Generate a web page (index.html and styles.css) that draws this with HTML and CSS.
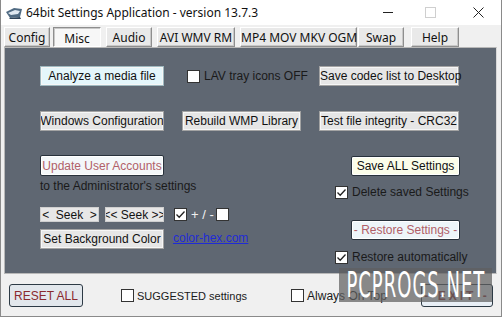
FILE: index.html
```html
<!DOCTYPE html>
<html lang="en">
<head>
  <meta charset="UTF-8">
  <title>64bit Settings Application</title>
  <link rel="stylesheet" href="styles.css">
</head>
<body>
  <div class="window">
    <div class="titlebar">
      <svg class="app-icon" width="18" height="14" viewBox="0 0 18 14">
        <path d="M1 6 L9 2 L17 3 L15 11 L5 12 Z" fill="#4f6a82"/>
        <path d="M3 7 L10 4 L15 5 L13 8 L6 9 Z" fill="#dfe8f0"/>
        <path d="M5 12 L15 11 L16 13 L4 13 Z" fill="#2e4358"/>
      </svg>
      <span class="title">64bit Settings Application - version 13.7.3</span>
      <div class="controls">
        <span class="ctl ctl-min"></span>
        <span class="ctl ctl-max"></span>
        <svg class="ctl ctl-close" width="11" height="11" viewBox="0 0 11 11">
          <path d="M0.5 0.5 L10.5 10.5 M10.5 0.5 L0.5 10.5" stroke="#222" stroke-width="1"/>
        </svg>
      </div>
    </div>

    <div class="tabs">
      <button class="tab tab-config">Config</button>
      <button class="tab tab-active">Misc</button>
      <button class="tab">Audio</button>
      <button class="tab tab-wide">AVI WMV RM</button>
      <button class="tab tab-wider">MP4 MOV MKV OGM</button>
      <button class="tab tab-swap">Swap</button>
      <button class="tab tab-help">Help</button>
    </div>

    <div class="panel">
      <div class="grid-top">
        <button class="btn btn-cyan">Analyze a media file</button>
        <label class="check check-lav"><span class="box"></span>LAV tray icons OFF</label>
        <button class="btn">Save codec list to Desktop</button>

        <button class="btn btn-clip"><span>Windows Configuration</span></button>
        <button class="btn">Rebuild WMP Library</button>
        <button class="btn">Test file integrity - CRC32</button>
      </div>

      <div class="lower">
        <div class="left">
          <button class="btn btn-red btn-tall">Update User Accounts</button>
          <div class="note">to the Administrator's settings</div>
          <div class="seek-row">
            <button class="btn-seek">&lt;&nbsp; Seek &nbsp;&gt;</button>
            <button class="btn-seek btn-clip"><span>&lt;&lt; Seek &gt;&gt;</span></button>
            <span class="box box-checked"><svg width="11" height="11" viewBox="0 0 11 11"><path d="M1.5 5.5 L4.2 8.3 L9.5 2.5" fill="none" stroke="#222" stroke-width="1.3"/></svg></span>
            <span class="plusminus">+ / -</span>
            <span class="box"></span>
          </div>
          <div class="bg-row">
            <button class="btn">Set Background Color</button>
            <a class="link" href="#">color-hex.com</a>
          </div>
        </div>

        <div class="right">
          <button class="btn btn-yellow">Save ALL Settings</button>
          <label class="check check-del"><span class="box box-checked"><svg width="11" height="11" viewBox="0 0 11 11"><path d="M1.5 5.5 L4.2 8.3 L9.5 2.5" fill="none" stroke="#222" stroke-width="1.3"/></svg></span>Delete saved Settings</label>
          <button class="btn btn-red btn-restore">- Restore Settings -</button>
          <label class="check check-auto"><span class="box box-checked"><svg width="11" height="11" viewBox="0 0 11 11"><path d="M1.5 5.5 L4.2 8.3 L9.5 2.5" fill="none" stroke="#222" stroke-width="1.3"/></svg></span>Restore automatically</label>
        </div>
      </div>
    </div>

    <div class="footer">
      <button class="btn-round btn-reset">RESET ALL</button>
      <label class="check check-suggest"><span class="box"></span>SUGGESTED settings</label>
      <label class="check check-top"><span class="box"></span>Always On Top</label>
      <button class="btn-round btn-exit">- EXIT -</button>
    </div>

    <div class="watermark"><span>PCPROGS.NET</span></div>
  </div>
</body>
</html>
```

FILE: styles.css
```css
:root {
  --panel: #5f6772;
  --face: #f0f0f0;
  --red-text: #b15f68;
}

body {
  margin: 0;
  padding: 0;
  background: var(--face);
  font-family: 'Liberation Sans', Arial, sans-serif;
  font-size: 12px;
  color: #1a1a1a;
}

.window {
  position: relative;
  width: 502px;
  height: 317px;
  box-sizing: border-box;
  border: 1px solid #8a8a8a;
  border-top: none;
  background: var(--face);
  overflow: hidden;
}

/* title bar */
.titlebar {
  height: 25px;
  background: #fff;
  display: flex;
  align-items: center;
  font-family: 'Noto Sans', sans-serif;
}

.app-icon {
  margin-left: 4px;
  margin-right: 3px;
}

.title {
  font-size: 12px;
  color: #111;
}

.controls {
  margin-left: auto;
  display: flex;
  align-items: center;
}

.ctl-min {
  width: 10px;
  height: 1px;
  background: #222;
  margin-right: 32px;
}

.ctl-max {
  width: 9px;
  height: 9px;
  border: 1px solid #cfcfcf;
  margin-right: 37px;
}

.ctl-close {
  margin-right: 17px;
}

/* tabs */
.tabs {
  display: flex;
  padding: 2px 0 0 3px;
  height: 22px;
  box-sizing: border-box;
}

.tab {
  font-family: 'Noto Sans', sans-serif;
  font-size: 12px;
  height: 20px;
  padding: 0;
  width: 46px;
  margin-right: 5px;
  background: #e9e9e9;
  color: #111;
  border: 1px solid;
  border-color: #fff #8e8e8e #8e8e8e #fff;
  box-shadow: inset -1px -1px 0 #c8c8c8;
  white-space: nowrap;
}

.tab-config {
  margin-right: 3px;
}

.tab-active {
  width: 48px;
  background: #f7f7f7;
  border-color: #8e8e8e #fff #fff #8e8e8e;
  box-shadow: inset 1px 1px 0 #c8c8c8;
  padding-top: 2px;
}

.tab-wide {
  width: 78px;
}

.tab-wider {
  width: 117px;
  margin-right: 1px;
}

.tab-swap {
  margin-right: 7px;
}

.tab-help {
  width: 48px;
}

/* main panel */
.panel {
  margin: 0 4px 0 3px;
  height: 227px;
  box-sizing: border-box;
  background: var(--panel);
  border: 1px solid #b8b8b8;
  border-right-color: #d8d8d8;
  padding: 18px 0 0 35px;
}

.grid-top {
  display: grid;
  grid-template-columns: 124px 119px 140px;
  grid-auto-rows: 20px;
  column-gap: 18px;
  row-gap: 25px;
}

.btn {
  font: inherit;
  font-size: 12px;
  height: 20px;
  padding: 0;
  background: #e6e6e6;
  color: #111;
  border: 1px solid #a3a3a3;
  box-shadow: inset 0 0 0 1px #f6f6f6;
  white-space: nowrap;
}

.btn-clip {
  overflow: hidden;
  display: flex;
  align-items: center;
  justify-content: center;
}

.btn-clip span {
  flex-shrink: 0;
}

.btn-cyan {
  background: #e4f6fb;
  border-color: #9fb9c0;
}

.btn-red {
  color: var(--red-text);
  background: #f3f7f9;
  border-color: #27313b;
  border-radius: 2px;
  box-shadow: inset 0 0 0 1px #fff;
}

.btn-tall {
  width: 124px;
  height: 21px;
}

.btn-yellow {
  width: 109px;
  background: #fbfdea;
  border-color: #27313b;
  border-radius: 2px;
  box-shadow: inset 0 0 0 1px #fff;
}

.btn-restore {
  width: 109px;
  background: #edf5f9;
  margin-top: 21px;
}

/* checkboxes */
.check {
  display: flex;
  align-items: center;
  gap: 4px;
  white-space: nowrap;
}

.box {
  width: 11px;
  height: 11px;
  flex-shrink: 0;
  border: 1px solid #333;
  background: #fff;
  display: inline-flex;
  align-items: center;
  justify-content: center;
}

.check-lav {
  padding-left: 5px;
}

/* lower half */
.lower {
  display: flex;
  margin-top: 24px;
}

.left {
  width: 295px;
}

.note {
  margin-top: 2px;
  line-height: 16px;
}

.seek-row {
  display: flex;
  align-items: center;
  margin-top: 13px;
  height: 15px;
}

.btn-seek {
  font: inherit;
  font-size: 12px;
  width: 59px;
  height: 15px;
  padding: 0;
  margin-right: 6px;
  background: #e7e7e7;
  color: #111;
  border: 1px solid #cfcfcf;
  line-height: 12px;
  white-space: nowrap;
}

.seek-row .box-checked {
  margin-left: 4px;
}

.plusminus {
  font-size: 13px;
  margin: 0 2px 0 4px;
  color: #f0f0f0;
}

.bg-row {
  display: flex;
  align-items: center;
  margin-top: 7px;
  gap: 9px;
}

.bg-row .btn {
  width: 124px;
}

.link {
  color: #1f2bd6;
  text-decoration: underline;
  margin-top: -2px;
}

.right {
  width: 125px;
  display: flex;
  flex-direction: column;
  align-items: flex-end;
  padding-top: 1px;
}

.right .check {
  align-self: stretch;
}

.check-del {
  margin-top: 9px;
}

.check-auto {
  margin-top: 10px;
}

/* footer */
.footer {
  display: flex;
  align-items: center;
  padding: 10px 0 0 8px;
}

.footer .check {
  font-size: 11px;
  gap: 3px;
}

.btn-round {
  font: inherit;
  font-size: 12px;
  height: 23px;
  padding: 0;
  border: 1px solid #2d3a45;
  border-radius: 3px;
  color: #8a2a2e;
}

.btn-reset {
  width: 74px;
  background: #e2e7ec;
}

.check-suggest {
  margin-left: 38px;
}

.footer .check-top {
  margin-left: 44px;
  font-size: 12px;
}

.btn-exit {
  width: 72px;
  margin-left: auto;
  margin-right: 8px;
  background: #e8eff6;
  font-weight: bold;
  letter-spacing: 3px;
}

/* overlay */
.watermark {
  position: absolute;
  left: 338px;
  top: 268px;
  width: 153px;
  height: 34px;
  background: rgba(96, 96, 96, 0.72);
  color: #fff;
  font-family: 'DejaVu Sans', sans-serif;
  font-size: 36px;
  line-height: 36px;
  display: flex;
  justify-content: center;
  overflow: hidden;
}

.watermark span {
  flex-shrink: 0;
  transform: scaleX(0.5);
  letter-spacing: 2px;
  margin-top: -1px;
}
```
